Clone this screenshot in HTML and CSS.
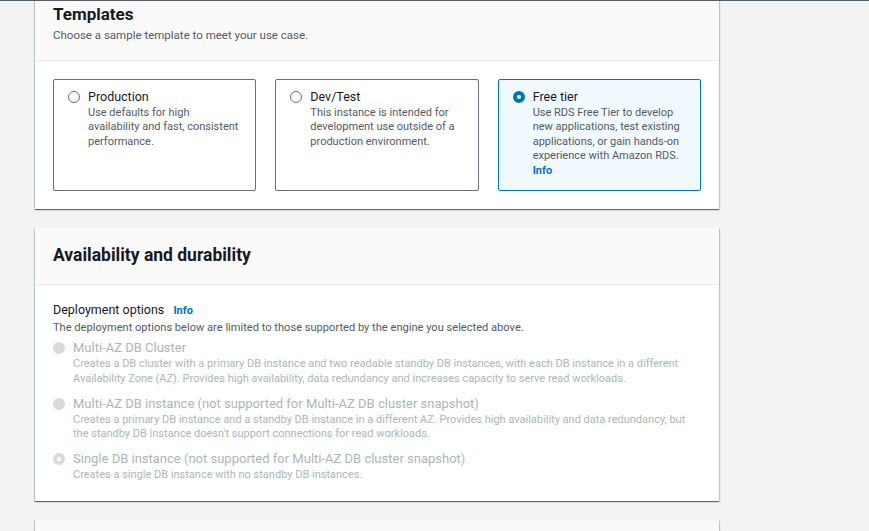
FILE: index.html
```html
<!DOCTYPE html>
<html lang="en">
<head>
<meta charset="utf-8">
<title>Create database</title>
<link rel="stylesheet" href="styles.css">
</head>
<body>
<div class="viewport">
  <div class="page">
    <section class="card card-first">
      <header class="card-head">
        <h2 class="card-title">Templates</h2>
        <p class="card-sub">Choose a sample template to meet your use case.</p>
      </header>
      <div class="card-body">
        <div class="tiles">
          <div class="tile">
            <span class="radio"></span>
            <div class="tile-text">
              <div class="tile-label">Production</div>
              <div class="tile-desc">Use defaults for high<br>availability and fast, consistent<br>performance.</div>
            </div>
          </div>
          <div class="tile">
            <span class="radio"></span>
            <div class="tile-text">
              <div class="tile-label">Dev/Test</div>
              <div class="tile-desc">This instance is intended for<br>development use outside of a<br>production environment.</div>
            </div>
          </div>
          <div class="tile tile-selected">
            <span class="radio radio-checked"></span>
            <div class="tile-text">
              <div class="tile-label">Free tier</div>
              <div class="tile-desc">Use RDS Free Tier to develop<br>new applications, test existing<br>applications, or gain hands-on<br>experience with Amazon RDS.<br><a class="info" href="#">Info</a></div>
            </div>
          </div>
        </div>
      </div>
    </section>

    <section class="card">
      <header class="card-head card-head-single">
        <h2 class="card-title title-wide">Availability and durability</h2>
      </header>
      <div class="card-body body-form">
        <div class="field-label">Deployment options <a class="info info-label" href="#">Info</a></div>
        <div class="field-desc">The deployment options below are limited to those supported by the engine you selected above.</div>
        <div class="options">
          <div class="option">
            <span class="radio radio-disabled"></span>
            <div class="option-text">
              <div class="option-label">Multi-AZ DB Cluster</div>
              <div class="option-desc">Creates a DB cluster with a primary DB instance and two readable standby DB instances, with each DB instance in a different<br>Availability Zone (AZ). Provides high availability, data redundancy and increases capacity to serve read workloads.</div>
            </div>
          </div>
          <div class="option">
            <span class="radio radio-disabled"></span>
            <div class="option-text">
              <div class="option-label">Multi-AZ DB instance (not supported for Multi-AZ DB cluster snapshot)</div>
              <div class="option-desc">Creates a primary DB instance and a standby DB instance in a different AZ. Provides high availability and data redundancy, but<br>the standby DB instance doesn't support connections for read workloads.</div>
            </div>
          </div>
          <div class="option">
            <span class="radio radio-disabled-checked"></span>
            <div class="option-text">
              <div class="option-label">Single DB instance (not supported for Multi-AZ DB cluster snapshot)</div>
              <div class="option-desc">Creates a single DB instance with no standby DB instances.</div>
            </div>
          </div>
        </div>
      </div>
    </section>

    <section class="card card-next">
      <header class="card-head card-head-empty"></header>
    </section>
  </div>
</div>
</body>
</html>
```

FILE: styles.css
```css
* { box-sizing: border-box; }

html, body {
  margin: 0;
  padding: 0;
  background: #f2f3f3;
  font-family: Roboto, "Noto Sans", Arial, sans-serif;
  color: #16191f;
}

.viewport {
  height: 531px;
  overflow: hidden;
  border-top: 1px solid #545b64;
}

.page {
  margin-top: -13px;
  padding-left: 35px;
  display: flex;
  flex-direction: column;
  gap: 19px;
}

.card {
  width: 684px;
  background: #ffffff;
  box-shadow: 0 1px 1px 0 rgba(0, 28, 36, 0.45), 1px 1px 1px 0 rgba(0, 28, 36, 0.15), -1px 1px 1px 0 rgba(0, 28, 36, 0.15);
}

.card-head {
  background: #fafafa;
  border-bottom: 1px solid #eaeded;
  padding: 15px 18px 17px;
}

.card-head-single {
  padding: 16px 18px 18px;
}

.card-title {
  margin: 0;
  font-size: 17px;
  line-height: 22px;
  font-weight: 700;
  color: #16191f;
}

.title-wide {
  font-size: 17.5px;
}

.card-sub {
  margin: 3px 0 0;
  font-size: 11.5px;
  line-height: 14.5px;
  color: #545b64;
}

.card-body {
  padding: 18px 18px 18px;
}

.tiles {
  display: grid;
  grid-template-columns: repeat(3, 1fr);
  gap: 19px;
}

.tile {
  display: flex;
  align-items: flex-start;
  gap: 8px;
  border: 1px solid #687078;
  border-radius: 2px;
  padding: 8px 10px 11px 14px;
  min-height: 112px;
  background: #ffffff;
}

.tile-selected {
  border-color: #0073bb;
  background: #f1faff;
}

.radio {
  flex: none;
  width: 12px;
  height: 12px;
  border-radius: 50%;
  border: 1px solid #687078;
  background: #ffffff;
  margin-top: 3px;
}

.radio-checked {
  border: 4px solid #0073bb;
}

.radio-disabled {
  border-color: #d5dbdb;
  background: #d5dbdb;
}

.radio-disabled-checked {
  border: 4px solid #d5dbdb;
  background: #ffffff;
}

.tile-label {
  font-size: 12.5px;
  line-height: 18px;
  color: #16191f;
}

.tile-desc {
  font-size: 11px;
  line-height: 14.5px;
  color: #545b64;
}

.info {
  color: #0073bb;
  font-weight: 700;
  text-decoration: none;
  font-size: 11px;
}

.body-form {
  padding: 17px 18px 18px;
}

.field-label {
  font-size: 12.5px;
  line-height: 16px;
  color: #16191f;
}

.info-label {
  margin-left: 6px;
}

.field-desc {
  font-size: 11.1px;
  line-height: 14.5px;
  color: #545b64;
  margin-top: 2px;
}

.options {
  display: flex;
  flex-direction: column;
  gap: 8.5px;
  margin-top: 4px;
}

.option {
  display: flex;
  align-items: flex-start;
  gap: 8px;
}

.option .radio {
  margin-top: 3px;
}

.option-label {
  font-size: 13px;
  line-height: 18px;
  color: #aab7b8;
}

.option-desc {
  font-size: 11px;
  line-height: 14.5px;
  color: #aab7b8;
}

.card-head-empty {
  height: 60px;
  border-bottom: none;
}
```
